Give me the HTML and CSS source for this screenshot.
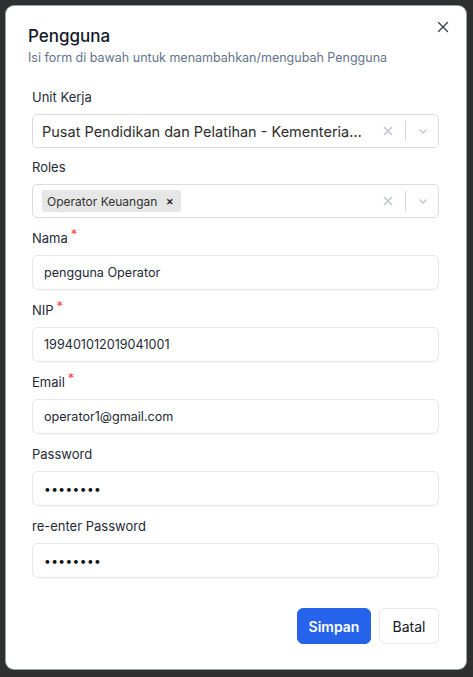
FILE: index.html
```html
<!DOCTYPE html>
<html>
<head>
<meta charset="utf-8">
<link rel="stylesheet" href="styles.css">
</head>
<body>
<div class="backdrop">
  <div class="modal">
    <div class="modal-header">
      <h2 class="title">Pengguna</h2>
      <p class="subtitle">Isi form di bawah untuk menambahkan/mengubah Pengguna</p>
      <button class="close" aria-label="Tutup">
        <svg width="12" height="12" viewBox="0 0 12 12"><path d="M1.5 1.5 L10.5 10.5 M10.5 1.5 L1.5 10.5" stroke="#374151" stroke-width="1.4" stroke-linecap="round"/></svg>
      </button>
    </div>
    <form class="form">
      <div class="field sel">
        <label class="label">Unit Kerja</label>
        <div class="select">
          <div class="select-value">Pusat Pendidikan dan Pelatihan - Kementerian Keuangan</div>
          <div class="select-icons">
            <svg class="clear" width="12" height="12" viewBox="0 0 12 12"><path d="M2 2 L10 10 M10 2 L2 10" stroke="#c4c8cf" stroke-width="1.6"/></svg>
            <span class="sep"></span>
            <svg class="chev" width="12" height="12" viewBox="0 0 12 12"><path d="M2.5 4.5 L6 8 L9.5 4.5" fill="none" stroke="#c4c8cf" stroke-width="1.4"/></svg>
          </div>
        </div>
      </div>
      <div class="field sel">
        <label class="label">Roles</label>
        <div class="select">
          <div class="select-value multi">
            <span class="tag">Operator Keuangan <b class="tag-x">&#x2715;</b></span>
          </div>
          <div class="select-icons">
            <svg class="clear" width="12" height="12" viewBox="0 0 12 12"><path d="M2 2 L10 10 M10 2 L2 10" stroke="#c4c8cf" stroke-width="1.6"/></svg>
            <span class="sep"></span>
            <svg class="chev" width="12" height="12" viewBox="0 0 12 12"><path d="M2.5 4.5 L6 8 L9.5 4.5" fill="none" stroke="#c4c8cf" stroke-width="1.4"/></svg>
          </div>
        </div>
      </div>
      <div class="field">
        <label class="label">Nama<span class="req">*</span></label>
        <div class="input">pengguna Operator</div>
      </div>
      <div class="field">
        <label class="label">NIP<span class="req">*</span></label>
        <div class="input">199401012019041001</div>
      </div>
      <div class="field">
        <label class="label">Email<span class="req">*</span></label>
        <div class="input">operator1@gmail.com</div>
      </div>
      <div class="field">
        <label class="label">Password</label>
        <div class="input pw">&#x2022;&#x2022;&#x2022;&#x2022;&#x2022;&#x2022;&#x2022;&#x2022;</div>
      </div>
      <div class="field">
        <label class="label">re-enter Password</label>
        <div class="input pw">&#x2022;&#x2022;&#x2022;&#x2022;&#x2022;&#x2022;&#x2022;&#x2022;</div>
      </div>
      <div class="actions">
        <button type="button" class="btn primary">Simpan</button>
        <button type="button" class="btn outline">Batal</button>
      </div>
    </form>
  </div>
</div>
</body>
</html>
```

FILE: styles.css
```css
* { box-sizing: border-box; }
html, body { margin: 0; padding: 0; }
body {
  background: #2f2f2f;
  font-family: Inter, "Noto Sans", sans-serif;
  width: 473px;
  height: 677px;
  overflow: hidden;
}
.backdrop {
  padding: 6px 0 0 6px;
}
.modal {
  width: 460px;
  height: 663px;
  background: #fff;
  border-radius: 8px;
  box-shadow: 0 0 0 1px #9aa0a8;
  position: relative;
}
.modal-header {
  padding: 19px 22px 0 22px;
}
.title {
  margin: 0;
  font-size: 17px;
  font-weight: 500;
  line-height: 22px;
  color: #111827;
}
.subtitle {
  margin: 2px 0 0 0;
  font-size: 12.5px;
  line-height: 18px;
  color: #64748b;
}
.close {
  position: absolute;
  top: 9px;
  right: 11px;
  width: 24px;
  height: 24px;
  border: 0;
  background: transparent;
  padding: 0;
  display: flex;
  align-items: center;
  justify-content: center;
}
.form {
  padding: 21px 27px 0 26px;
  display: flex;
  flex-direction: column;
}
.field {
  display: flex;
  flex-direction: column;
  margin-bottom: 11px;
}
.field.sel {
  margin-bottom: 10px;
}
.sel + .field:not(.sel) {
  margin-top: 1px;
}
.label {
  font-size: 13px;
  line-height: 18px;
  color: #1f2937;
  margin-bottom: 8px;
  display: flex;
  align-items: flex-start;
}
.req {
  color: #ef4444;
  font-size: 13px;
  line-height: 10px;
  margin-left: 3px;
}
.select {
  height: 34px;
  border: 1px solid #d9dce1;
  border-radius: 5px;
  display: flex;
  align-items: center;
}
.select-value {
  flex: 1;
  min-width: 0;
  padding-left: 9px;
  margin-right: 20px;
  font-size: 14.5px;
  color: #2d2d2d;
  white-space: nowrap;
  overflow: hidden;
  text-overflow: ellipsis;
}
.select-value.multi {
  padding-left: 9px;
  margin-right: 0;
  display: flex;
}
.tag {
  background: #e6e6e6;
  border-radius: 2px;
  font-size: 12px;
  color: #333;
  height: 22px;
  display: inline-flex;
  align-items: center;
  padding: 0 7px 0 5px;
}
.tag-x {
  font-size: 9px;
  margin-left: 9px;
  font-weight: 900;
  color: #222;
}
.select-icons {
  display: flex;
  align-items: center;
  padding-right: 9px;
}
.clear { margin-right: 11px; }
.sep {
  width: 1px;
  height: 20px;
  background: #d4d7dc;
  margin-right: 11px;
}
.input {
  height: 35px;
  border: 1px solid #e5e7eb;
  border-radius: 6px;
  box-shadow: 0 1px 1px rgba(0,0,0,0.03);
  padding-left: 11px;
  display: flex;
  align-items: center;
  font-size: 12.6px;
  color: #1f2937;
}
.input.pw {
  font-size: 12px;
  letter-spacing: 0.4px;
  color: #111;
}
.actions {
  display: flex;
  justify-content: flex-end;
  gap: 8px;
  margin-top: 19px;
}
.btn {
  height: 36px;
  border-radius: 6px;
  font-family: Inter, "Noto Sans", sans-serif;
  font-size: 14px;
  padding: 0;
}
.primary {
  background: #2563eb;
  color: #fff;
  border: 1px solid #2563eb;
  font-weight: 600;
  width: 74px;
}
.outline {
  background: #fff;
  color: #111827;
  border: 1px solid #e5e7eb;
  width: 60px;
}
```
